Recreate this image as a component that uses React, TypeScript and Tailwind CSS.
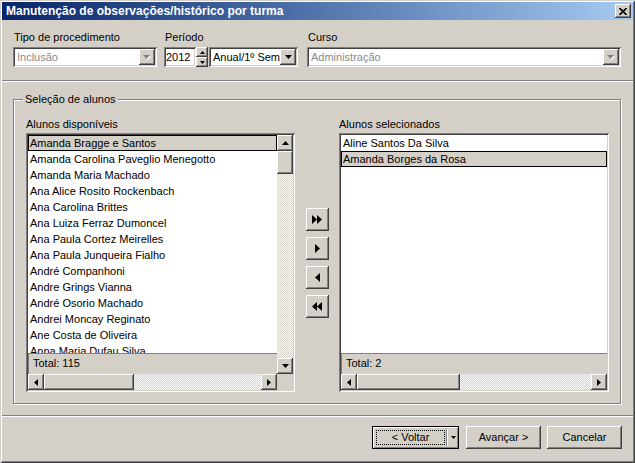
import React from "react";

const RAISED =
  "shadow-[inset_-1px_-1px_#404040,inset_1px_1px_#ffffff,inset_-2px_-2px_#808080,inset_2px_2px_#d4d0c8]";
const SUNKEN =
  "shadow-[inset_1px_1px_#808080,inset_-1px_-1px_#ffffff,inset_2px_2px_#404040,inset_-2px_-2px_#d4d0c8]";
const CHECKER =
  "bg-[repeating-conic-gradient(#d4d0c8_0%_25%,#ffffff_0%_50%)] bg-[length:2px_2px]";

type Dir = "up" | "down" | "left" | "right";

function Tri({ dir, w, h, color = "#000" }: { dir: Dir; w: number; h: number; color?: string }) {
  const pts = {
    up: `0,${h} ${w},${h} ${w / 2},0`,
    down: `0,0 ${w},0 ${w / 2},${h}`,
    left: `${w},0 ${w},${h} 0,${h / 2}`,
    right: `0,0 0,${h} ${w},${h / 2}`,
  }[dir];
  return (
    <svg width={w} height={h} viewBox={`0 0 ${w} ${h}`} className="block">
      <polygon points={pts} fill={color} />
    </svg>
  );
}

function ScrollBtn({ dir }: { dir: Dir }) {
  const vert = dir === "up" || dir === "down";
  return (
    <div className={`w-[16px] h-[16px] shrink-0 bg-[#d4d0c8] ${RAISED} flex items-center justify-center`}>
      {vert ? <Tri dir={dir} w={7} h={4} /> : <Tri dir={dir} w={4} h={7} />}
    </div>
  );
}

function DropBtn({ disabled }: { disabled?: boolean }) {
  return (
    <div className={`w-[16px] h-[16px] shrink-0 bg-[#d4d0c8] ${RAISED} flex items-center justify-center`}>
      {disabled ? (
        <svg width={8} height={5} viewBox="0 0 8 5" className="block">
          <polygon points="1,1 8,1 4.5,5" fill="#ffffff" />
          <polygon points="0,0 7,0 3.5,4" fill="#808080" />
        </svg>
      ) : (
        <Tri dir="down" w={7} h={4} />
      )}
    </div>
  );
}

function Combo({ text, disabled, className }: { text: string; disabled?: boolean; className: string }) {
  return (
    <div className={`h-[20px] p-[2px] bg-white ${SUNKEN} flex items-center ${className}`}>
      <div
        className={`flex-1 pl-[2px] whitespace-nowrap overflow-hidden ${
          disabled ? "text-[#8a8a8a]" : "text-black"
        }`}
      >
        {text}
      </div>
      <DropBtn disabled={disabled} />
    </div>
  );
}

function HScroll({ thumb }: { thumb: number }) {
  return (
    <div className="flex h-[16px]">
      <ScrollBtn dir="left" />
      <div className={`h-[16px] shrink-0 bg-[#d4d0c8] ${RAISED}`} style={{ width: thumb }} />
      <div className={`flex-1 ${CHECKER}`} />
      <ScrollBtn dir="right" />
    </div>
  );
}

function ListBox({
  items,
  selected,
  vscroll,
  thumb,
  total,
  width,
}: {
  items: string[];
  selected: number;
  vscroll: boolean;
  thumb: number;
  total: string;
  width: string;
}) {
  return (
    <div className={`h-[259px] p-[2px] bg-white ${SUNKEN} ${width}`}>
      <div
        className={`grid h-full ${
          vscroll ? "grid-cols-[1fr_16px]" : "grid-cols-[1fr]"
        } grid-rows-[1fr_21px_16px]`}
      >
        <div className="overflow-hidden bg-white min-h-0">
          {items.map((t, i) => (
            <div
              key={i}
              className={`h-[16px] leading-[14px] pl-[1px] whitespace-nowrap border ${
                i === selected ? "bg-[#d4d0c8] border-black" : "border-transparent"
              }`}
            >
              {t}
            </div>
          ))}
        </div>
        {vscroll && (
          <div className="row-span-2 flex flex-col">
            <ScrollBtn dir="up" />
            <div className={`h-[23px] shrink-0 bg-[#d4d0c8] ${RAISED}`} />
            <div className={`flex-1 ${CHECKER}`} />
            <ScrollBtn dir="down" />
          </div>
        )}
        <div className="bg-[#d4d0c8] border-t border-l border-[#808080] pl-[4px] leading-[19px] whitespace-nowrap">
          {total}
        </div>
        <HScroll thumb={thumb} />
        {vscroll && <div className="bg-[#d4d0c8]" />}
      </div>
    </div>
  );
}

function MoveBtn({ children }: { children: React.ReactNode }) {
  return (
    <div className={`w-[23px] h-[23px] bg-[#d4d0c8] ${RAISED} flex items-center justify-center`}>
      {children}
    </div>
  );
}

const left = [
  "Amanda Bragge e Santos",
  "Amanda Carolina Paveglio Menegotto",
  "Amanda Maria Machado",
  "Ana Alice Rosito Rockenbach",
  "Ana Carolina Brittes",
  "Ana Luiza Ferraz Dumoncel",
  "Ana Paula Cortez Meirelles",
  "Ana Paula Junqueira Fialho",
  "André Companhoni",
  "Andre Grings Vianna",
  "André Osorio Machado",
  "Andrei Moncay Reginato",
  "Ane Costa de Oliveira",
  "Anna Maria Dufau Silva",
];

const right = ["Aline Santos Da Silva", "Amanda Borges da Rosa"];

export default function App() {
  return (
    <div
      className={`w-[635px] h-[463px] bg-[#d4d0c8] p-[2px] flex flex-col text-[11px] leading-[13px] text-black font-['Liberation_Sans',Arial,sans-serif] shadow-[inset_1px_1px_#d4d0c8,inset_-1px_-1px_#404040,inset_2px_2px_#ffffff,inset_-2px_-2px_#808080] overflow-hidden`}
    >
      {/* Title bar */}
      <div className="h-[18px] shrink-0 flex items-center justify-between bg-gradient-to-r from-[#0a246a] to-[#a6caf0] pl-[4px] pr-[2px]">
        <span className="font-bold text-white text-[12px] whitespace-nowrap">
          Manutenção de observações/histórico por turma
        </span>
        <div className={`w-[16px] h-[14px] bg-[#d4d0c8] ${RAISED} flex items-center justify-center`}>
          <svg width={8} height={7} viewBox="0 0 8 7" className="block">
            <path d="M0.5 0 L7.5 7 M7.5 0 L0.5 7" stroke="#000" strokeWidth={1.6} />
          </svg>
        </div>
      </div>

      {/* Top fields */}
      <div className="flex mt-[11px] ml-[11px]">
        <div className="w-[144px] flex flex-col">
          <span className="pl-[1px]">Tipo de procedimento</span>
          <Combo text="Inclusão" disabled className="w-[144px] mt-[3px]" />
        </div>
        <div className="w-[134px] ml-[7px] flex flex-col">
          <span className="pl-[1px]">Período</span>
          <div className="flex mt-[3px] h-[20px]">
            <div className={`w-[32px] h-[20px] p-[2px] bg-white ${SUNKEN} leading-[16px] pl-[2px]`}>2012</div>
            <div className="w-[12px] h-[20px] flex flex-col">
              <div className={`h-[10px] bg-[#d4d0c8] ${RAISED} flex items-center justify-center`}>
                <Tri dir="up" w={5} h={3} />
              </div>
              <div className={`h-[10px] bg-[#d4d0c8] ${RAISED} flex items-center justify-center`}>
                <Tri dir="down" w={5} h={3} />
              </div>
            </div>
            <Combo text="Anual/1º Sem" className="w-[89px] ml-[1px]" />
          </div>
        </div>
        <div className="w-[314px] ml-[9px] flex flex-col">
          <span className="pl-[1px]">Curso</span>
          <Combo text="Administração" disabled className="w-[314px] mt-[3px]" />
        </div>
      </div>

      {/* Separator */}
      <div className="mt-[13px] h-[2px] border-t border-[#808080] border-b-white border-b" />

      {/* Group box */}
      <div className="relative mt-[17px] ml-[11px] mr-[12px] h-[305px] border border-[#808080] shadow-[inset_1px_1px_#ffffff,1px_1px_#ffffff] pl-[12px] pt-[18px]">
        <span className="absolute left-[9px] -top-[7px] bg-[#d4d0c8] px-[2px]">Seleção de alunos</span>
        <div className="flex">
          <div className="w-[269px] flex flex-col">
            <span className="pl-[0px] whitespace-nowrap">Alunos disponíveis</span>
            <div className="mt-[2px]">
              <ListBox items={left} selected={0} vscroll thumb={90} total="Total: 115" width="w-[269px]" />
            </div>
          </div>
          <div className="w-[44px] flex flex-col items-center justify-center gap-[6px] pt-[15px]">
            <MoveBtn>
              <div className="flex">
                <Tri dir="right" w={5} h={9} />
                <Tri dir="right" w={5} h={9} />
              </div>
            </MoveBtn>
            <MoveBtn>
              <Tri dir="right" w={5} h={9} />
            </MoveBtn>
            <MoveBtn>
              <Tri dir="left" w={5} h={9} />
            </MoveBtn>
            <MoveBtn>
              <div className="flex">
                <Tri dir="left" w={5} h={9} />
                <Tri dir="left" w={5} h={9} />
              </div>
            </MoveBtn>
          </div>
          <div className="w-[270px] flex flex-col">
            <span className="whitespace-nowrap">Alunos selecionados</span>
            <div className="mt-[2px]">
              <ListBox items={right} selected={1} vscroll={false} thumb={103} total="Total: 2" width="w-[270px]" />
            </div>
          </div>
        </div>
      </div>

      {/* Bottom separator */}
      <div className="mt-[11px] h-[2px] border-t border-[#808080] border-b-white border-b" />

      {/* Buttons */}
      <div className="flex justify-end mt-[9px] mr-[11px]">
        <div className="w-[87px] h-[23px] border border-black flex bg-[#d4d0c8]">
          <div className="flex-1 flex shadow-[inset_1px_1px_#ffffff,inset_-1px_-1px_#808080]">
            <div className="flex-1 p-[3px] pr-[1px]">
              <div className="h-full border border-dotted border-black flex items-center justify-center">
                &lt; Voltar
              </div>
            </div>
            <div className="w-[2px] my-[2px] border-l border-[#808080] border-r border-r-white" />
            <div className="w-[10px] flex items-center justify-center">
              <Tri dir="down" w={5} h={3} />
            </div>
          </div>
        </div>
        <div className={`w-[75px] h-[23px] ml-[7px] bg-[#d4d0c8] ${RAISED} flex items-center justify-center`}>
          Avançar &gt;
        </div>
        <div className={`w-[75px] h-[23px] ml-[6px] bg-[#d4d0c8] ${RAISED} flex items-center justify-center`}>
          Cancelar
        </div>
      </div>
    </div>
  );
}
